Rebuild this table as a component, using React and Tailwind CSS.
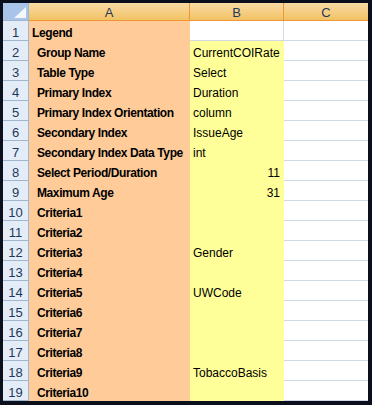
import React from 'react';

const rows = [
  { a: 'Legend', b: null, top: true },
  { a: 'Group Name', b: 'CurrentCOIRate' },
  { a: 'Table Type', b: 'Select' },
  { a: 'Primary Index', b: 'Duration' },
  { a: 'Primary Index Orientation', b: 'column' },
  { a: 'Secondary Index', b: 'IssueAge' },
  { a: 'Secondary Index Data Type', b: 'int' },
  { a: 'Select Period/Duration', b: '11', num: true },
  { a: 'Maximum Age', b: '31', num: true },
  { a: 'Criteria1', b: '' },
  { a: 'Criteria2', b: '' },
  { a: 'Criteria3', b: 'Gender' },
  { a: 'Criteria4', b: '' },
  { a: 'Criteria5', b: 'UWCode' },
  { a: 'Criteria6', b: '' },
  { a: 'Criteria7', b: '' },
  { a: 'Criteria8', b: '' },
  { a: 'Criteria9', b: 'TobaccoBasis' },
  { a: 'Criteria10', b: '' },
];

const font = { fontFamily: "'Liberation Sans', Arial, sans-serif" };

const ColHeader = ({ label, last }) => (
  <div
    className={`h-[18px] pt-[2px] flex items-center justify-center bg-gradient-to-b from-[#f9dba3] to-[#f2c263] border-b border-[#f29536] text-[13px] text-[#1e395b] ${last ? '' : 'border-r'} border-[#f29536]`}
  >
    {label}
  </div>
);

const Sheet = () => (
  <div className="grid grid-cols-[26px_161px_94px_84px] bg-white text-[12px] leading-none whitespace-nowrap" style={font}>
    {/* corner */}
    <div className="h-[18px] bg-[#a9c4e9] border-r border-b border-[#9eb6ce] relative">
      <div className="absolute right-[2px] bottom-[2px] w-0 h-0 border-l-[12px] border-l-transparent border-b-[11px] border-b-[#f4f7fb]" />
    </div>
    <ColHeader label="A" />
    <ColHeader label="B" />
    <ColHeader label="C" last />

    {rows.map((r, i) => (
      <React.Fragment key={i}>
        <div className="h-[20px] pt-[3px] flex items-center justify-center bg-[#e4ecf7] border-r border-b border-[#9eb6ce] text-[13px] text-[#1e395b]">
          {i + 1}
        </div>
        <div className={`h-[20px] pt-[4px] flex items-center bg-[#ffcc99] font-bold tracking-[-0.4px] text-black overflow-hidden ${r.top ? 'pl-[3px]' : 'pl-[8px]'}`}>
          {r.a}
        </div>
        {r.top ? (
          <div className="h-[20px] bg-white border-r border-b border-[#d0d7e5]" />
        ) : (
          <div className={`h-[20px] pt-[4px] flex items-center bg-[#ffff99] text-black overflow-hidden ${r.num ? 'justify-end pr-[4px]' : 'pl-[3px]'}`}>
            {r.b}
          </div>
        )}
        <div className="h-[20px] bg-white border-b border-[#d0d7e5]" />
      </React.Fragment>
    ))}
  </div>
);

export default function App() {
  return (
    <div className="w-[372px] h-[405px] bg-[#0b0f1c] pt-[3px] pl-[3px] pr-[4px] overflow-hidden">
      <Sheet />
    </div>
  );
}
